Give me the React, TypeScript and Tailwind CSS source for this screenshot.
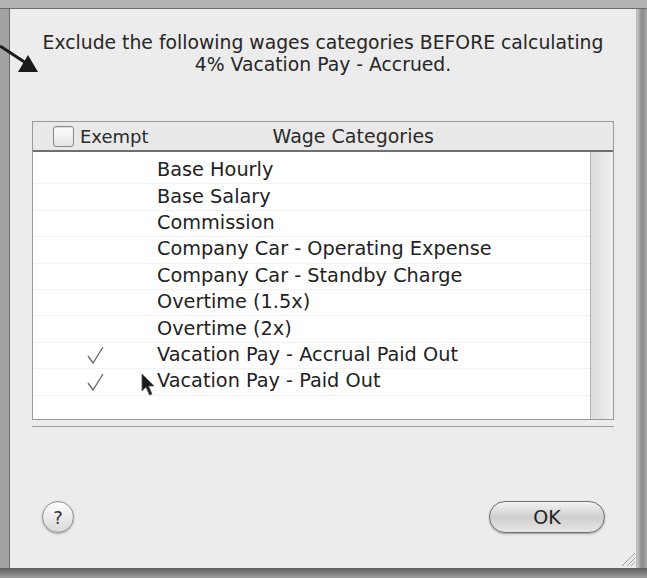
import React from "react";

const categories = [
  { name: "Base Hourly", exempt: false },
  { name: "Base Salary", exempt: false },
  { name: "Commission", exempt: false },
  { name: "Company Car - Operating Expense", exempt: false },
  { name: "Company Car - Standby Charge", exempt: false },
  { name: "Overtime (1.5x)", exempt: false },
  { name: "Overtime (2x)", exempt: false },
  { name: "Vacation Pay - Accrual Paid Out", exempt: true },
  { name: "Vacation Pay - Paid Out", exempt: true },
];

const font = { fontFamily: '"DejaVu Sans", "Liberation Sans", sans-serif' };

function Pointer() {
  return (
    <svg width="16" height="24" viewBox="0 0 16 24" className="absolute left-[141px] top-[373px]">
      <path d="M1 1 L1 18 L5 14 L8.5 22 L11 21 L7.5 13 L13 13 Z" fill="#1c1c1c" stroke="#555" strokeWidth="0.8" />
    </svg>
  );
}

function CalloutArrow() {
  return (
    <svg width="44" height="80" viewBox="0 0 44 80" className="absolute left-0 top-0">
      <line x1="0" y1="46" x2="26" y2="63" stroke="#1a1a1a" strokeWidth="3" />
      <polygon points="38,72 18,72 28,55" fill="#1a1a1a" />
    </svg>
  );
}

function CheckMark() {
  return (
    <svg width="18" height="20" viewBox="0 0 18 20">
      <polyline points="1,11 6,18 16,2" fill="none" stroke="#6e6e6e" strokeWidth="1.4" />
    </svg>
  );
}

function ResizeGrip() {
  return (
    <svg width="18" height="18" viewBox="0 0 18 18" className="absolute right-[11px] bottom-[11px]">
      <line x1="4" y1="17" x2="17" y2="4" stroke="#9a9a9a" strokeWidth="1" />
      <line x1="9" y1="17" x2="17" y2="9" stroke="#9a9a9a" strokeWidth="1" />
      <line x1="13" y1="17" x2="17" y2="13" stroke="#9a9a9a" strokeWidth="1" />
    </svg>
  );
}

export default function App() {
  return (
    <div className="relative flex h-[578px] w-[647px] flex-col overflow-hidden bg-[#8c8c8c]" style={font}>
      {/* title bar strip */}
      <div className="h-[9px] shrink-0 border-b border-[#6e6e6e] bg-[#b3b3b3]" />

      <div className="flex h-[559px] shrink-0">
        {/* left frame */}
        <div className="w-[10px] shrink-0 border-r border-[#6a6a6a] bg-[#a2a2a2]" />

        {/* dialog body */}
        <div className="flex w-[626px] shrink-0 flex-col bg-[#ececec]">
          <div className="pt-[23px] text-center text-[18.8px] leading-[22px] text-[#262626]">
            <p>Exclude the following wages categories BEFORE calculating</p>
            <p>4% Vacation Pay - Accrued.</p>
          </div>

          {/* wage category table */}
          <div className="ml-[22px] mt-[45px] w-[582px] border border-[#9a9a9a] bg-[#e6e6e6]">
            <div className="flex h-[30px] items-center border-b-2 border-[#6f6f6f] bg-[#e9e9e9] text-[18px] text-[#2a2a2a]">
              <span className="ml-[20px] h-[21px] w-[21px] rounded-[3px] border border-[#8a8a8a] bg-gradient-to-b from-white to-[#e4e4e4] shadow-[inset_0_1px_1px_rgba(0,0,0,0.15)]" />
              <span className="ml-[6px]">Exempt</span>
              <span className="ml-[124px] text-[19px]">Wage Categories</span>
            </div>
            <div className="flex h-[267px]">
              <div className="w-[558px] border-r border-[#b4b4b4] bg-white pt-[6px]">
                {categories.map((c) => (
                  <div key={c.name} className="flex h-[26.4px] items-center border-b border-[#f3f3f3] text-[19.3px] text-[#222]">
                    <span className="flex w-[124px] pl-[54px]">{c.exempt && <CheckMark />}</span>
                    <span>{c.name}</span>
                  </div>
                ))}
              </div>
              <div className="flex-1 bg-gradient-to-r from-[#dcdcdc] to-[#f0f0f0]" />
            </div>
          </div>
          <div className="ml-[22px] mt-[6px] h-[2px] w-[582px] border-t border-[#a0a0a0] border-b-[#d6d6d6]" />

          {/* buttons */}
          <div className="mt-[73px] flex items-center justify-between pl-[32px] pr-[31px]">
            <button className="flex h-[32px] w-[32px] items-center justify-center rounded-full border border-[#8e8e8e] bg-gradient-to-b from-white to-[#d8d8d8] text-[18px] text-[#333] shadow-[0_1px_2px_rgba(0,0,0,0.3)]">
              ?
            </button>
            <button className="flex h-[32px] w-[116px] items-center justify-center rounded-full border border-[#6f6f6f] bg-gradient-to-b from-[#f4f4f4] via-[#cfcfcf] to-[#e6e6e6] text-[19px] text-[#222] shadow-[0_1px_2px_rgba(0,0,0,0.35)]">
              OK
            </button>
          </div>
        </div>

        {/* right frame */}
        <div className="w-[11px] shrink-0 border-l border-[#bdbdbd] bg-gradient-to-r from-[#c8c8c8] via-[#8a8a8a] to-[#a8a8a8]" />
      </div>

      <div className="flex-1 bg-gradient-to-b from-[#5e5e5e] to-[#a0a0a0]" />

      <CalloutArrow />
      <Pointer />
      <ResizeGrip />
    </div>
  );
}
